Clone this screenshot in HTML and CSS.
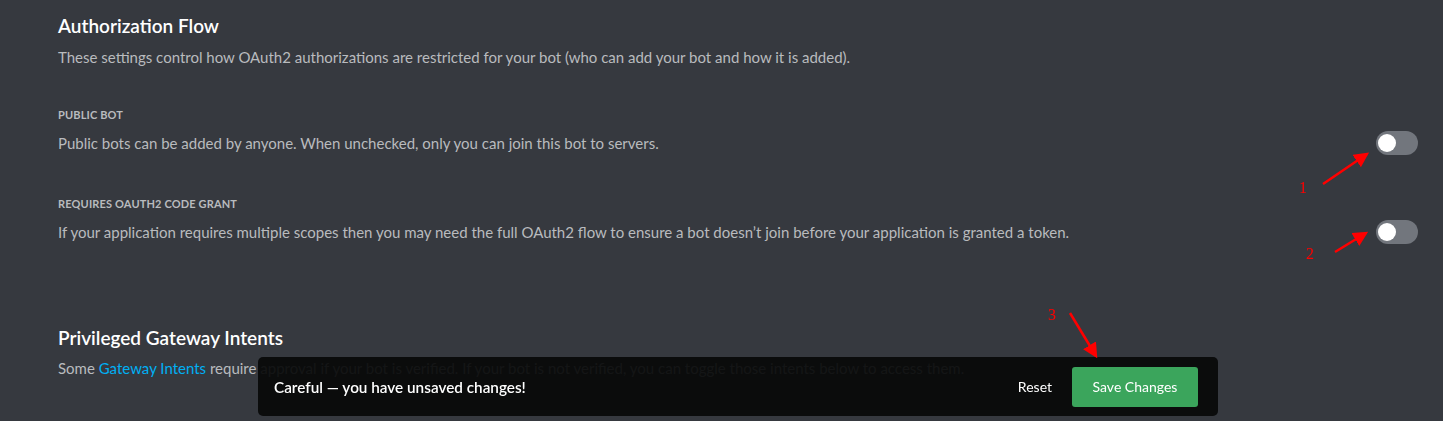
FILE: index.html
```html
<!DOCTYPE html>
<html>
<head>
<meta charset="utf-8">
<link rel="stylesheet" href="styles.css">
</head>
<body>
<main class="page">
  <section class="section">
    <h2 class="title">Authorization Flow</h2>
    <p class="desc">These settings control how OAuth2 authorizations are restricted for your bot (who can add your bot and how it is added).</p>
    <div class="row first">
      <div class="row-text">
        <div class="label">PUBLIC BOT</div>
        <p class="desc">Public bots can be added by anyone. When unchecked, only you can join this bot to servers.</p>
      </div>
      <div class="toggle"><span class="knob"></span></div>
    </div>
    <div class="row">
      <div class="row-text">
        <div class="label">REQUIRES OAUTH2 CODE GRANT</div>
        <p class="desc">If your application requires multiple scopes then you may need the full OAuth2 flow to ensure a bot doesn’t join before your application is granted a token.</p>
      </div>
      <div class="toggle"><span class="knob"></span></div>
    </div>
  </section>
  <section class="section intents">
    <h2 class="title">Privileged Gateway Intents</h2>
    <p class="desc">Some <a class="link" href="#">Gateway Intents</a> require approval if your bot is verified. If your bot is not verified, you can toggle those intents below to access them.</p>
  </section>
</main>

<div class="notice">
  <span class="notice-text">Careful — you have unsaved changes!</span>
  <div class="notice-actions">
    <button class="btn-reset">Reset</button>
    <button class="btn-save">Save Changes</button>
  </div>
</div>

<svg class="annotations" width="1443" height="421" viewBox="0 0 1443 421">
  <defs>
    <marker id="ah" markerWidth="6" markerHeight="6" refX="5" refY="3" orient="auto" markerUnits="strokeWidth">
      <path d="M0,0 L6,3 L0,6 Z" fill="#ff0000"/>
    </marker>
  </defs>
  <line x1="1323" y1="184" x2="1367" y2="154" stroke="#ff0000" stroke-width="2.5" marker-end="url(#ah)"/>
  <line x1="1335" y1="252" x2="1366" y2="233" stroke="#ff0000" stroke-width="2.5" marker-end="url(#ah)"/>
  <line x1="1070" y1="313" x2="1096" y2="356" stroke="#ff0000" stroke-width="2.5" marker-end="url(#ah)"/>
  <text x="1299" y="193" class="anno">1</text>
  <text x="1306" y="259" class="anno">2</text>
  <text x="1048" y="320" class="anno">3</text>
</svg>
</body>
</html>
```

FILE: styles.css
```css
html, body {
  margin: 0;
  padding: 0;
  background: #36393f;
  height: 421px;
  overflow: hidden;
}

body {
  font-family: Lato, "Noto Sans", sans-serif;
  color: #b9bbbe;
}

.page {
  padding: 14px 25px 0 58px;
}

.section {
  display: flex;
  flex-direction: column;
}

.title {
  margin: 0;
  font-size: 19px;
  font-weight: 600;
  line-height: 24px;
  color: #ffffff;
}

.desc {
  margin: 0;
  font-size: 15px;
  line-height: 20px;
  color: #b9bbbe;
}

.section > .desc {
  margin-top: 9px;
}

.row {
  display: flex;
  align-items: flex-end;
  justify-content: space-between;
  margin-top: 44px;
}

.row.first {
  margin-top: 41px;
}

.row-text {
  display: flex;
  flex-direction: column;
  gap: 11px;
}

.label {
  font-size: 11px;
  font-weight: 700;
  line-height: 14px;
  letter-spacing: 0.15px;
  color: #b9bbbe;
}

.toggle {
  width: 42px;
  height: 24px;
  border-radius: 12px;
  background: #72767d;
  position: relative;
  flex-shrink: 0;
  margin-bottom: -2px;
}

.knob {
  position: absolute;
  left: 2px;
  top: 3px;
  width: 18px;
  height: 18px;
  border-radius: 50%;
  background: #ffffff;
}

.intents {
  margin-top: 84px;
}

.intents > .desc {
  margin-top: 8px;
}

.link {
  color: #00b0f4;
  text-decoration: none;
}

.notice {
  position: fixed;
  left: 258px;
  top: 357px;
  width: 960px;
  height: 59px;
  box-sizing: border-box;
  padding: 0 20px 0 16px;
  border-radius: 5px;
  background: rgba(8, 9, 9, 0.93);
  display: flex;
  align-items: center;
  justify-content: space-between;
}

.notice-text {
  font-size: 15.3px;
  font-weight: 600;
  color: #ffffff;
}

.notice-actions {
  display: flex;
  align-items: center;
  gap: 20px;
}

.btn-reset {
  background: none;
  border: none;
  padding: 0;
  font-family: inherit;
  font-size: 14px;
  color: #ffffff;
}

.btn-save {
  width: 126px;
  height: 40px;
  border: none;
  border-radius: 3px;
  background: #3ba55c;
  color: #ffffff;
  font-family: inherit;
  font-size: 14px;
}

.annotations {
  position: fixed;
  left: 0;
  top: 0;
  pointer-events: none;
}

.anno {
  font-family: "Liberation Serif", serif;
  font-size: 16px;
  fill: #ff0000;
}
```
